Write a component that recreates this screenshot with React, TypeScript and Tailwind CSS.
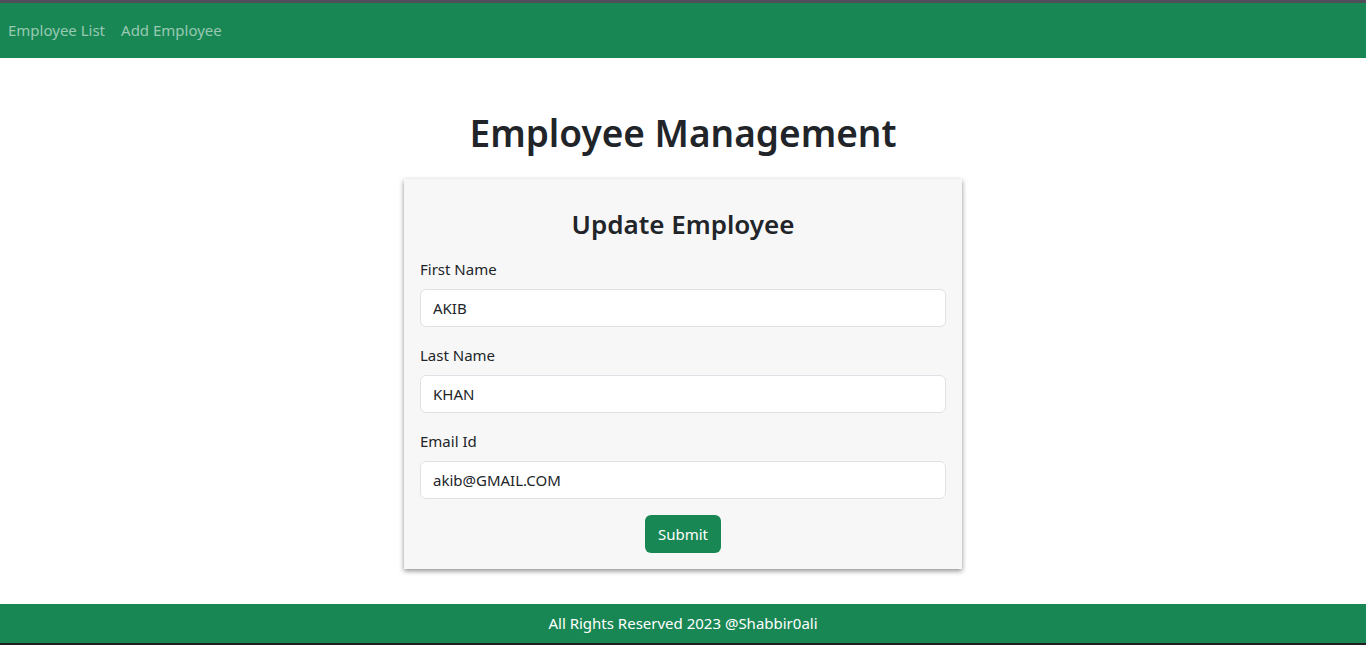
import React from 'react';

const font = { fontFamily: '"Noto Sans", "Open Sans", sans-serif' };

const Field = ({ label, value }: { label: string; value: string }) => (
  <div className="flex flex-col">
    <label className="text-[15px] leading-6 text-[#212529] mb-2">{label}</label>
    <input
      readOnly
      value={value}
      className="h-[38px] w-full rounded-md border border-[#dee2e6] bg-white px-3 text-[15px] text-[#212529] outline-none"
    />
  </div>
);

export default function App() {
  return (
    <div className="flex h-[645px] flex-col bg-white" style={font}>
      <div className="h-[3px] bg-[#504e5a]"></div>

      {/* Navbar */}
      <nav className="flex h-[55px] items-center bg-[#198754] px-0">
        <a href="#" className="px-2 text-[15px] text-[#98c9b2]">Employee List</a>
        <a href="#" className="px-2 text-[15px] text-[#98c9b2]">Add Employee</a>
      </nav>

      {/* Main */}
      <main className="flex flex-1 flex-col items-center">
        <h1 className="mt-[51px] h-[48px] text-[37px] leading-[48px] font-semibold text-[#212529]">
          Employee Management
        </h1>

        <div className="mt-[22px] w-[558px] bg-[#f7f7f7] px-4 pt-[28px] pb-4 shadow-[0_2px_5px_rgba(0,0,0,0.45)]">
          <h3 className="h-[34px] text-center text-[26px] leading-[34px] font-semibold text-[#212529]">
            Update Employee
          </h3>
          <div className="mt-4 flex flex-col gap-4">
            <Field label="First Name" value="AKIB" />
            <Field label="Last Name" value="KHAN" />
            <Field label="Email Id" value="akib@GMAIL.COM" />
            <div className="flex justify-center">
              <button className="h-[38px] w-[76px] rounded-md bg-[#198754] text-[15px] text-white">
                Submit
              </button>
            </div>
          </div>
        </div>
      </main>

      {/* Footer */}
      <footer className="flex h-[39px] items-center justify-center bg-[#198754] text-[15px] text-white">
        All Rights Reserved 2023 @Shabbir0ali
      </footer>
      <div className="h-[2px] bg-[#202020]"></div>
    </div>
  );
}
